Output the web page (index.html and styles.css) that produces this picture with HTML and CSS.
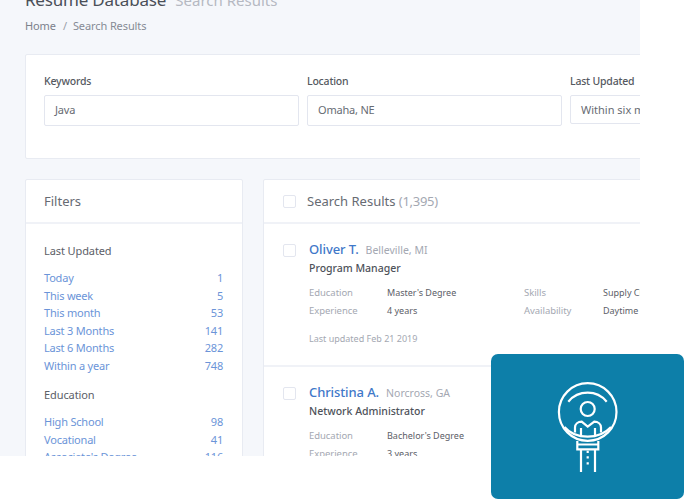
FILE: index.html
```html
<!DOCTYPE html>
<html lang="en">
<head>
<meta charset="utf-8">
<title>Resume Database</title>
<link rel="stylesheet" href="styles.css">
</head>
<body>
<div class="shell">
  <header class="head">
    <h1 class="title">Resume Database <small class="sub">Search Results</small></h1>
    <nav class="crumbs"><span>Home</span><span class="sep">/</span><span class="cur">Search Results</span></nav>
  </header>
  <section class="card search">
    <div class="field"><span class="lbl">Keywords</span><div class="input">Java</div></div>
    <div class="field"><span class="lbl">Location</span><div class="input">Omaha, NE</div></div>
    <div class="field"><span class="lbl">Last Updated</span><div class="input short">Within six months</div></div>
  </section>
  <div class="cols">
    <aside class="card filters">
      <div class="card-head"><h2 class="ftitle">Filters</h2></div>
      <div class="fbody">
        <h3 class="group">Last Updated</h3>
        <ul class="flist">
          <li><a>Today</a><a>1</a></li>
          <li><a>This week</a><a>5</a></li>
          <li><a>This month</a><a>53</a></li>
          <li><a>Last 3 Months</a><a>141</a></li>
          <li><a>Last 6 Months</a><a>282</a></li>
          <li><a>Within a year</a><a>748</a></li>
        </ul>
        <h3 class="group">Education</h3>
        <ul class="flist">
          <li><a>High School</a><a>98</a></li>
          <li><a>Vocational</a><a>41</a></li>
          <li><a>Associate's Degree</a><a>116</a></li>
        </ul>
      </div>
    </aside>
    <main class="card results">
      <div class="card-head rhead"><span class="box"></span><h2 class="ftitle">Search Results <span class="count">(1,395)</span></h2></div>
      <article class="item">
        <span class="box"></span>
        <div class="info">
          <div class="nameline"><a class="name">Oliver T.</a><span class="place">Belleville, MI</span></div>
          <div class="role">Program Manager</div>
          <dl class="meta">
            <dt>Education</dt><dd>Master's Degree</dd><dt>Skills</dt><dd>Supply Chain</dd>
            <dt>Experience</dt><dd>4 years</dd><dt>Availability</dt><dd>Daytime</dd>
          </dl>
          <div class="updated">Last updated Feb 21 2019</div>
        </div>
      </article>
      <article class="item">
        <span class="box"></span>
        <div class="info">
          <div class="nameline"><a class="name">Christina A.</a><span class="place">Norcross, GA</span></div>
          <div class="role">Network Administrator</div>
          <dl class="meta">
            <dt>Education</dt><dd>Bachelor's Degree</dd><dt>Skills</dt><dd>Networking</dd>
            <dt>Experience</dt><dd>3 years</dd><dt>Availability</dt><dd>Daytime</dd>
          </dl>
        </div>
      </article>
    </main>
  </div>
</div>
<div class="badge">
  <svg class="badge-icon" viewBox="0 0 76 92" width="76" height="92" fill="none" stroke="#fff" stroke-width="2.200">
    <circle cx="37.700" cy="32" r="28.800"/>
    <path d="M18.300 21.700 C23 16 30 12.700 37.700 12.700 C45.500 12.700 52 16 56.700 21.700"/>
    <circle cx="37.700" cy="29" r="7"/>
    <path d="M14.500 47 C20 53.500 28 56.700 37.700 56.700 C47.500 56.700 55 53.500 61 47"/>
    <path d="M25 52.500 V47.500 C25 44 28 41.700 31.700 41.700 L37.700 46.700 L44.300 41.700 C48 41.700 51 44 51 47.500 V52.500"/>
    <path d="M31 48 V56.500 M45 48 V56.500"/>
    <path d="M27.300 61 V69.300 H48.300 V61 M27.300 64.500 H48.300"/>
    <path d="M31 69.300 V92 M45 69.300 V92"/>
    <path d="M37.700 70.700 V72.900 M37.700 76.300 V78.500 M37.700 82.300 V84.500"/>
  </svg>
</div>
</body>
</html>
```

FILE: styles.css
```css
* { box-sizing: border-box; }
html, body { margin: 0; padding: 0; }
body {
  width: 684px;
  height: 499px;
  background: #fff;
  overflow: hidden;
  position: relative;
  font-family: "Noto Sans", "Open Sans", sans-serif;
  color: #5c6068;
}
.shell {
  width: 640px;
  height: 456px;
  overflow: hidden;
  background: #f5f7fb;
  padding: 0 0 0 25px;
}
.head { margin-top: -12px; }
.title { margin: 0; font-size: 17px; line-height: 24px; font-weight: 400; letter-spacing: -0.2px; color: #4a4f58; white-space: nowrap; }
.sub { font-size: 15px; letter-spacing: 0; color: #b5b9c2; margin-left: 5px; }
.crumbs { margin-top: 5px; display: flex; font-size: 11px; line-height: 18px; letter-spacing: -0.1px; color: #7c818b; }
.sep { margin: 0 6px 0 7px; color: #9a9ea8; }
.cur { color: #868b95; }
.card { background: #fff; border: 1px solid #e8ebf2; border-radius: 2px; }
.search {
  width: 700px;
  height: 105px;
  margin-top: 19px;
  padding: 18px 18px 0;
  display: flex;
  gap: 8px;
}
.field { width: 255px; flex: none; }
.lbl { display: block; font-size: 10.500px; line-height: 17px; font-weight: 500; letter-spacing: -0.2px; color: #55595f; }
.input {
  margin-top: 5px;
  height: 31px;
  border: 1.500px solid #e3e6ef;
  border-radius: 2px;
  padding: 0 10px;
  font-size: 11px;
  line-height: 28px;
  letter-spacing: -0.2px;
  color: #676b73;
  white-space: nowrap;
  overflow: hidden;
}
.input.short { height: 29px; line-height: 27px; letter-spacing: 0; }
.cols { display: flex; gap: 20px; margin-top: 20px; align-items: flex-start; }
.filters { width: 218px; flex: none; height: 400px; }
.results { width: 420px; flex: none; height: 400px; }
.card-head { height: 44px; border-bottom: 2px solid #f0f2f7; padding: 0 18px; display: flex; align-items: center; }
.rhead { padding: 0 19px; gap: 11px; }
.ftitle { margin: 0; font-size: 13px; font-weight: 400; color: #676b73; white-space: nowrap; }
.count { color: #a4a8b2; letter-spacing: -0.3px; }
.fbody { padding: 18px 19px 0 18px; }
.group { margin: 0 0 10px; font-size: 11px; line-height: 17px; font-weight: 400; letter-spacing: -0.1px; color: #5c6068; }
.flist { list-style: none; margin: 0 0 12px; padding: 0; }
.flist li { display: flex; justify-content: space-between; font-size: 11px; line-height: 17.500px; letter-spacing: -0.2px; color: #6b94d8; white-space: nowrap; }
.box { flex: none; width: 13px; height: 13px; border: 1.500px solid #e3e6ef; border-radius: 2px; background: #fff; }
.item { display: flex; gap: 13px; padding: 17px 19px 0; height: 143px; border-bottom: 2px solid #f0f2f7; }
.item .box { margin-top: 3px; }
.nameline { display: flex; align-items: baseline; gap: 7px; line-height: 17px; white-space: nowrap; }
.name { font-size: 13px; font-weight: 500; letter-spacing: -0.1px; color: #3f78c9; }
.place { font-size: 10.500px; color: #a4a8b2; }
.role { font-size: 10.500px; line-height: 18px; font-weight: 500; color: #4e525a; white-space: nowrap; }
.meta { margin: 7px 0 0; display: grid; grid-template-columns: 78px 137px 79px 100px; grid-auto-rows: 17.500px; font-size: 9.500px; line-height: 17.500px; white-space: nowrap; }
.meta dt { color: #a4a8b2; letter-spacing: -0.05px; }
.meta dd { margin: 0; font-size: 9px; color: #5c6068; }
.updated { margin-top: 11px; font-size: 9px; line-height: 17px; color: #a4a8b2; }
.badge {
  position: absolute;
  left: 491px;
  top: 354px;
  width: 193px;
  height: 145px;
  background: #0d7fa9;
  border-radius: 7px;
  display: flex;
  align-items: center;
  justify-content: center;
}
.badge-icon { display: block; margin: 0 0 1px 0; }
```
